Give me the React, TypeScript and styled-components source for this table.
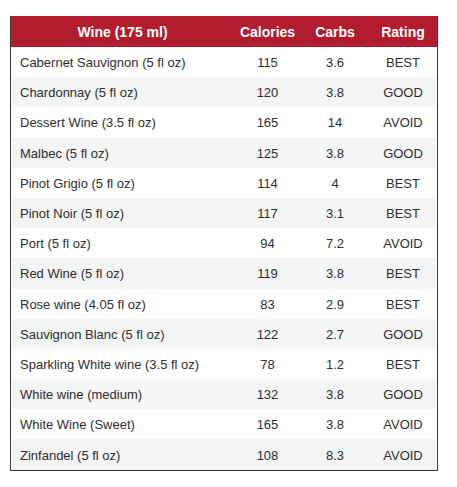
import React from "react";
import styled, { createGlobalStyle } from "styled-components";

const Global = createGlobalStyle`
  html, body { margin: 0; padding: 0; background: #ffffff; }
  body { font-family: "Liberation Sans", Arial, sans-serif; }
`;

const Page = styled.div`
  padding: 16px 21px 0 10px;
`;

const Table = styled.table`
  width: 426px;
  border-collapse: collapse;
  table-layout: fixed;
  border: 1px solid #3a3a3a;
  border-top: none;
  font-family: "Liberation Sans", Arial, sans-serif;
`;

const HeadCell = styled.th<{ $w: number }>`
  width: ${(p) => p.$w}px;
  height: 31px;
  padding: 0;
  background: #b11d2f;
  color: #ffffff;
  font-size: 14px;
  font-weight: bold;
  text-align: center;
  border: none;
`;

const Row = styled.tr<{ $alt: boolean }>`
  background: ${(p) => (p.$alt ? "#f3f4f4" : "#ffffff")};
`;

const Cell = styled.td<{ $left?: boolean }>`
  height: 29.2px;
  padding: 1px 0 0 ${(p) => (p.$left ? "9px" : "0")};
  font-size: 13px;
  color: #2e2e2e;
  text-align: ${(p) => (p.$left ? "left" : "center")};
  white-space: nowrap;
`;

const rows: [string, string, string, string][] = [
  ["Cabernet Sauvignon (5 fl oz)", "115", "3.6", "BEST"],
  ["Chardonnay (5 fl oz)", "120", "3.8", "GOOD"],
  ["Dessert Wine (3.5 fl oz)", "165", "14", "AVOID"],
  ["Malbec (5 fl oz)", "125", "3.8", "GOOD"],
  ["Pinot Grigio (5 fl oz)", "114", "4", "BEST"],
  ["Pinot Noir (5 fl oz)", "117", "3.1", "BEST"],
  ["Port (5 fl oz)", "94", "7.2", "AVOID"],
  ["Red Wine (5 fl oz)", "119", "3.8", "BEST"],
  ["Rose wine (4.05 fl oz)", "83", "2.9", "BEST"],
  ["Sauvignon Blanc (5 fl oz)", "122", "2.7", "GOOD"],
  ["Sparkling White wine (3.5 fl oz)", "78", "1.2", "BEST"],
  ["White wine (medium)", "132", "3.8", "GOOD"],
  ["White Wine (Sweet)", "165", "3.8", "AVOID"],
  ["Zinfandel (5 fl oz)", "108", "8.3", "AVOID"],
];

export default function App() {
  return (
    <>
      <Global />
      <Page>
        <Table>
          <thead>
            <tr>
              <HeadCell $w={223}>Wine (175 ml)</HeadCell>
              <HeadCell $w={67}>Calories</HeadCell>
              <HeadCell $w={68}>Carbs</HeadCell>
              <HeadCell $w={68}>Rating</HeadCell>
            </tr>
          </thead>
          <tbody>
            {rows.map((r, i) => (
              <Row key={r[0]} $alt={i % 2 === 1}>
                <Cell $left>{r[0]}</Cell>
                <Cell>{r[1]}</Cell>
                <Cell>{r[2]}</Cell>
                <Cell>{r[3]}</Cell>
              </Row>
            ))}
          </tbody>
        </Table>
      </Page>
    </>
  );
}
